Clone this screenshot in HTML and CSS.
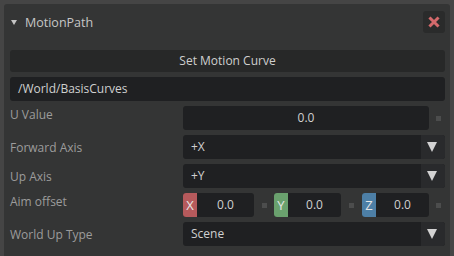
FILE: index.html
```html
<!DOCTYPE html>
<html lang="en">
<head>
    <meta charset="UTF-8">
    <title>MotionPath</title>
    <link rel="stylesheet" href="styles.css">
</head>
<body>
    <div class="panel">
        <div class="panel-header">
            <span class="collapse-arrow"></span>
            <span class="panel-title">MotionPath</span>
            <button class="close-btn">
                <svg width="12" height="12" viewBox="0 0 12 12">
                    <path d="M2.5 2.5 L9.5 9.5 M9.5 2.5 L2.5 9.5" stroke="#d46a6c" stroke-width="3" stroke-linecap="square"/>
                </svg>
            </button>
        </div>

        <div class="wide-btn">Set Motion Curve</div>
        <div class="path-field">/World/BasisCurves</div>

        <div class="prop-row">
            <div class="prop-label top">U Value</div>
            <div class="prop-value with-dot">
                <div class="field centered">0.0</div>
                <span class="dot"></span>
            </div>
        </div>

        <div class="prop-row">
            <div class="prop-label">Forward Axis</div>
            <div class="combo">
                <span class="combo-text">+X</span>
                <span class="combo-arrow"></span>
            </div>
        </div>

        <div class="prop-row">
            <div class="prop-label">Up Axis</div>
            <div class="combo">
                <span class="combo-text">+Y</span>
                <span class="combo-arrow"></span>
            </div>
        </div>

        <div class="prop-row">
            <div class="prop-label top">Aim offset</div>
            <div class="vector">
                <div class="vec-field"><span class="badge x">X</span><span class="vec-num">0.0</span></div>
                <span class="dot-slot"><span class="dot"></span></span>
                <div class="vec-field"><span class="badge y">Y</span><span class="vec-num">0.0</span></div>
                <span class="dot-slot"><span class="dot"></span></span>
                <div class="vec-field"><span class="badge z">Z</span><span class="vec-num">0.0</span></div>
                <span class="dot-slot"><span class="dot"></span></span>
            </div>
        </div>

        <div class="prop-row">
            <div class="prop-label">World Up Type</div>
            <div class="combo">
                <span class="combo-text">Scene</span>
                <span class="combo-arrow"></span>
            </div>
        </div>
    </div>
</body>
</html>
```

FILE: styles.css
```css
body {
    margin: 0;
    padding: 4px 4px 0 4px;
    background: #454545;
    font-family: 'Open Sans', sans-serif;
    font-size: 12px;
    height: 256px;
    box-sizing: border-box;
    overflow: hidden;
}

.panel {
    background: #343535;
    border-radius: 3px 3px 0 0;
    padding: 7px 5px 10px 6px;
    height: 100%;
    box-sizing: border-box;
}

.panel-header {
    display: flex;
    align-items: center;
    height: 22px;
    margin-bottom: 17px;
}

.collapse-arrow {
    width: 0;
    height: 0;
    border-left: 3px solid transparent;
    border-right: 3px solid transparent;
    border-top: 5px solid #c4c4c4;
    margin-left: 1px;
    margin-right: 8px;
}

.panel-title {
    color: #c6c6c6;
    font-size: 12.5px;
    flex: 1;
}

.close-btn {
    width: 22px;
    height: 22px;
    border: none;
    border-radius: 3px;
    background: #2a2b2b;
    padding: 0;
    display: flex;
    align-items: center;
    justify-content: center;
}

.wide-btn {
    height: 22px;
    line-height: 22px;
    background: #272828;
    border-radius: 3px;
    color: #cfcfcf;
    text-align: center;
    margin-bottom: 5px;
}

.path-field {
    height: 24px;
    line-height: 24px;
    background: #1f2022;
    border-radius: 3px;
    color: #d0d0d0;
    padding-left: 8px;
    margin-bottom: 5px;
}

.prop-row {
    display: flex;
    align-items: center;
    height: 24px;
    margin-bottom: 5px;
}

.prop-label {
    width: 173px;
    color: #9c9c9c;
    flex-shrink: 0;
}

.prop-label.top {
    align-self: flex-start;
    line-height: 18px;
}

.prop-value {
    flex: 1;
    display: flex;
    align-items: center;
    height: 24px;
}

.field {
    flex: 1;
    height: 24px;
    line-height: 24px;
    background: #1f2022;
    border-radius: 3px;
    color: #d0d0d0;
}

.field.centered {
    text-align: center;
}

.dot {
    width: 5px;
    height: 5px;
    background: #4c4d4d;
    display: block;
}

.with-dot .dot {
    margin-left: 7px;
    margin-right: 4px;
}

.combo {
    flex: 1;
    height: 24px;
    display: flex;
    background: #1f2022;
    border-radius: 3px;
    overflow: hidden;
}

.combo-text {
    flex: 1;
    line-height: 24px;
    color: #d0d0d0;
    padding-left: 8px;
}

.combo-arrow {
    width: 24px;
    background: #292a2c;
    position: relative;
}

.combo-arrow::after {
    content: '';
    position: absolute;
    left: 6px;
    top: 7px;
    border-left: 5px solid transparent;
    border-right: 5px solid transparent;
    border-top: 10px solid #d2d2d2;
}

.vector {
    flex: 1;
    display: grid;
    grid-template-columns: 71px 20px 67px 21px 67px 16px;
    height: 24px;
}

.vec-field {
    display: flex;
    background: #1f2022;
    border-radius: 3px;
    overflow: hidden;
}

.badge {
    width: 14px;
    line-height: 24px;
    text-align: center;
    color: #e6e6e6;
    font-size: 13px;
}

.badge.x { background: #b65a5c; }
.badge.y { background: #6aa16e; }
.badge.z { background: #4d7fa6; }

.vec-num {
    flex: 1;
    text-align: center;
    line-height: 24px;
    color: #d0d0d0;
}

.dot-slot {
    display: flex;
    align-items: center;
    justify-content: center;
}

.vector .dot-slot:last-child {
    justify-content: flex-end;
    padding-right: 4px;
}
```
